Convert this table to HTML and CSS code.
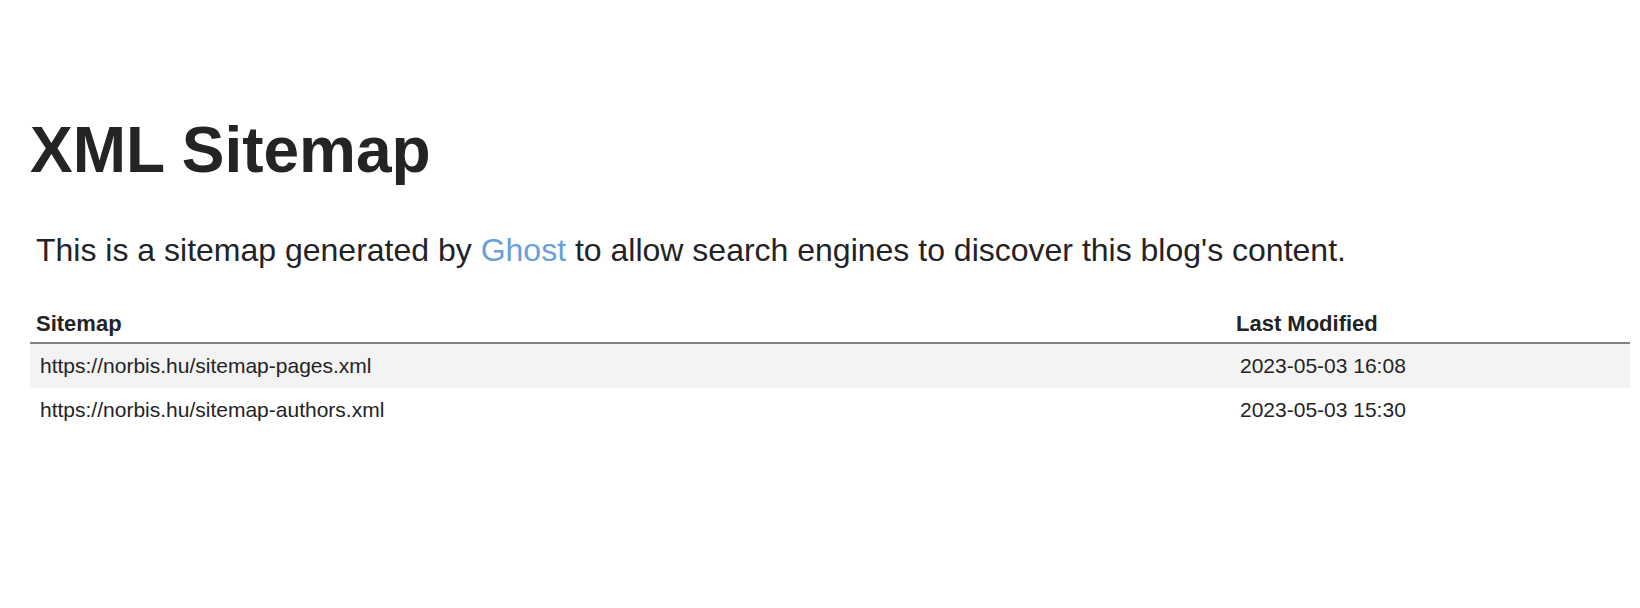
FILE: index.html
```html
<!DOCTYPE html>
<html lang="en">
<head>
<meta charset="utf-8">
<title>XML Sitemap</title>
<link rel="stylesheet" href="styles.css">
</head>
<body>
<div class="content">
  <h1 class="title">XML Sitemap</h1>
  <p class="expl">This is a sitemap generated by <a href="#">Ghost</a> to allow search engines to discover this blog's content.</p>
  <table class="sitemap">
    <thead>
      <tr><th class="col-url">Sitemap</th><th class="col-date">Last Modified</th></tr>
    </thead>
    <tbody>
      <tr class="odd"><td>https://norbis.hu/sitemap-pages.xml</td><td>2023-05-03 16:08</td></tr>
      <tr><td>https://norbis.hu/sitemap-authors.xml</td><td>2023-05-03 15:30</td></tr>
    </tbody>
  </table>
</div>
</body>
</html>
```

FILE: styles.css
```css
html, body {
  margin: 0;
  padding: 0;
  background: #ffffff;
}
body {
  font-family: "Liberation Sans", Arial, Helvetica, sans-serif;
  color: #232325;
}
.content {
  padding: 118px 10px 0 30px;
}
.title {
  margin: 0;
  font-size: 64px;
  line-height: 64px;
  font-weight: bold;
  color: #242426;
}
.expl {
  margin: 48px 0 0 6px;
  font-size: 32px;
  line-height: 40px;
}
.expl a {
  color: #6a9fdb;
  text-decoration: none;
}
.sitemap {
  margin-top: 36px;
  width: 100%;
  border-collapse: collapse;
  font-size: 21px;
  line-height: 24px;
}
.sitemap th {
  text-align: left;
  font-weight: bold;
  font-size: 22px;
  padding: 6px 6px 6px 6px;
  border-bottom: 2px solid #808080;
}
.col-url { width: 1188px; }
.sitemap td {
  padding: 10px 10px 10px 10px;
}
.sitemap tr.odd td {
  background: #f3f3f3;
}
```
